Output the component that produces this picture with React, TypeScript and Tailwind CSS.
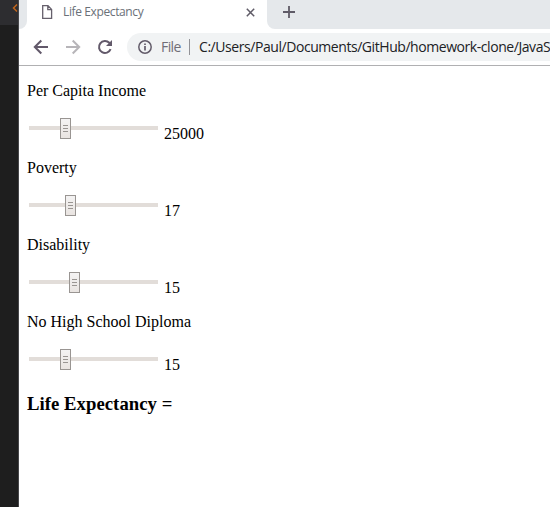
const sliders = [
  { label: 'Per Capita Income', value: '25000', offset: 31 },
  { label: 'Poverty', value: '17', offset: 36 },
  { label: 'Disability', value: '15', offset: 40 },
  { label: 'No High School Diploma', value: '15', offset: 31 },
];

function EditorStrip() {
  return (
    <aside className="flex w-[19px] shrink-0 flex-col border-r border-[#47474a] bg-[#1e1e1e]">
      <div className="flex h-[25px] justify-end bg-[#2d2d30] pt-[4px]">
        <svg width="6" height="8" viewBox="0 0 6 8" fill="none" stroke="#c1651c" strokeWidth="1.5">
          <path d="M5 0.5 1.5 4 5 7.5" />
        </svg>
      </div>
    </aside>
  );
}

function TabStrip() {
  return (
    <div className="flex h-[29px] bg-[#e5e8eb]">
      <div className="w-2 bg-white">
        <div className="h-full rounded-br-lg bg-[#e5e8eb]" />
      </div>
      <div className="flex w-[240px] bg-white">
        <svg className="ml-[14px] mt-[5px] shrink-0" width="12" height="14" viewBox="0 0 12 14" fill="none" stroke="#66606c" strokeWidth="1.3">
          <path d="M1.7 0.7H7l3.6 3.7v8.9H1.7zM6.8 0.7v4h3.8" />
        </svg>
        <span className="ml-[10px] mt-[4px] w-[81px] whitespace-nowrap font-['Open_Sans',sans-serif] text-[12px] leading-[16px] tracking-[-0.38px] text-[#6a7078]">Life Expectancy</span>
        <svg className="ml-[102px] mt-[8px] shrink-0" width="9" height="9" viewBox="0 0 9 9" fill="none" stroke="#5f5b67" strokeWidth="1.5">
          <path d="m.8.8 7.4 7.4M8.2.8.8 8.2" />
        </svg>
      </div>
      <div className="flex-1 bg-white">
        <div className="h-full rounded-bl-lg bg-[#e5e8eb] pl-[16px] pt-[6px]">
          <svg width="12" height="12" viewBox="0 0 12 12" stroke="#5f5b67" strokeWidth="1.8">
            <path d="M6 0v12M0 6h12" />
          </svg>
        </div>
      </div>
    </div>
  );
}

function Toolbar() {
  return (
    <div className="flex h-[37px] items-center border-b border-[#b0b0b2] bg-white pl-[14px]">
      <svg className="shrink-0" width="16" height="16" viewBox="0 0 16 16" fill="none" stroke="#62596a" strokeWidth="2">
        <path d="M15 8H2M8.3 1.5 1.8 8l6.5 6.5" />
      </svg>
      <svg className="ml-[16px] shrink-0" width="16" height="16" viewBox="0 0 16 16" fill="none" stroke="#b7b5b9" strokeWidth="2">
        <path d="M1 8h13M7.7 1.5 14.2 8l-6.5 6.5" />
      </svg>
      <svg className="ml-[16px] shrink-0" width="16" height="16" viewBox="0 0 16 16" fill="none">
        <path d="M13.6 10.2A6 6 0 1 1 12.3 3.8L14 5.5" stroke="#62596a" strokeWidth="2" />
        <path d="M15 1v6H9z" fill="#62596a" />
      </svg>
      <div className="ml-[14px] flex h-[28px] min-w-0 flex-1 items-center overflow-hidden rounded-l-full bg-[#f1f3f4] pl-[11px] font-['Open_Sans',sans-serif] text-[14px] leading-[20px]">
        <svg className="shrink-0" width="14" height="14" viewBox="0 0 14 14" fill="none" stroke="#625b69">
          <circle cx="7" cy="7" r="6.2" strokeWidth="1.5" />
          <path d="M7 6v4.5M7 3.5V5" strokeWidth="1.7" />
        </svg>
        <span className="ml-[9px] w-[21px] shrink-0 whitespace-nowrap tracking-[-0.6px] text-[#706d76]">File</span>
        <div className="ml-[7px] h-[16px] w-px shrink-0 bg-[#929297]" />
        <span className="ml-[9px] whitespace-nowrap tracking-[-0.44px] text-[#202124]">C:/Users/Paul/Documents/GitHub/homework-clone/JavaS</span>
      </div>
    </div>
  );
}

function Slider({ label, value, offset }: { label: string; value: string; offset: number }) {
  return (
    <div className="h-[77px]">
      <p className="h-[18px] text-[16px] leading-[18px]">{label}</p>
      <div className="flex pl-[2px] pt-[18px]">
        <div className="flex h-[21px] w-[129px] items-center bg-[linear-gradient(#e2ddd9,#e2ddd9)] bg-[length:100%_4px] bg-[position:0_8px] bg-no-repeat">
          <div className="flex h-[21px] w-[11px] flex-col items-center gap-[2px] border border-[#999592] bg-linear-to-b from-[#f4f3f3] to-[#e9e4e1] pt-[6px]" style={{ marginLeft: offset }}>
            <div className="h-px w-[5px] bg-[#999592]" />
            <div className="h-px w-[5px] bg-[#999592]" />
            <div className="h-px w-[5px] bg-[#999592]" />
          </div>
        </div>
        <span className="ml-[6px] mt-[7px] text-[16px] leading-[18px]">{value}</span>
      </div>
    </div>
  );
}

export default function App() {
  return (
    <div className="flex h-[507px] w-[550px] overflow-hidden bg-white">
      <EditorStrip />
      <div className="flex min-w-0 flex-1 flex-col">
        <TabStrip />
        <Toolbar />
        <main className="px-[8px] pt-[16px] font-['Liberation_Serif',serif] text-black">
          {sliders.map((slider) => (
            <Slider key={slider.label} {...slider} />
          ))}
          <h3 className="mt-[3px] text-[18.72px] font-bold leading-[22px] tracking-[0.04px]">Life Expectancy =</h3>
        </main>
      </div>
    </div>
  );
}
